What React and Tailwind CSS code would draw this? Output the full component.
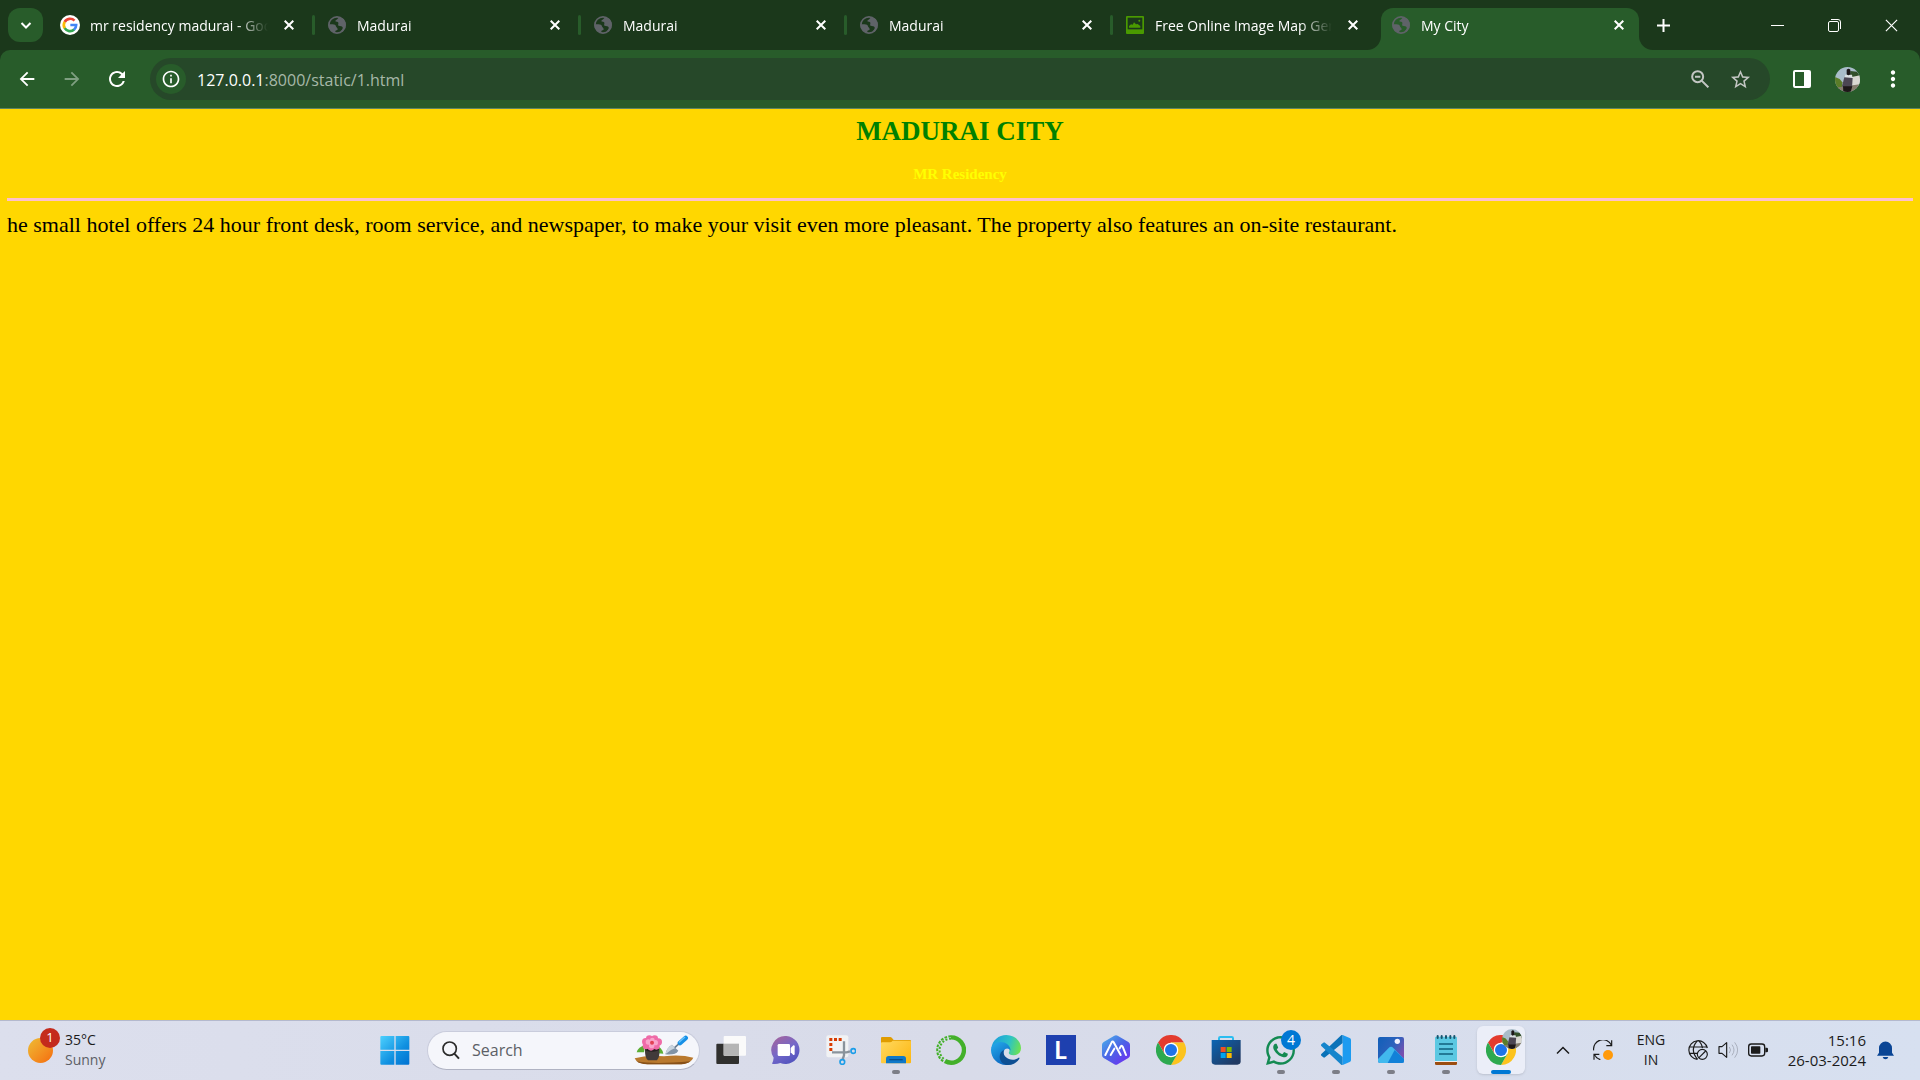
import { FaWhatsapp } from 'react-icons/fa';
import { MdArrowBack, MdArrowForward, MdRefresh, MdStarBorder, MdMoreVert, MdInfoOutline } from 'react-icons/md';

const Svg = ({ size = 'size-[30px]', box = '0 0 90 90', children }) => (
  <svg className={`${size} shrink-0`} viewBox={box} fill="none" aria-hidden="true">{children}</svg>
);

const Globe = () => (
  <Svg size="size-[18px]" box="0 0 54 54">
    <circle cx="27" cy="27" r="24.5" stroke="#5f6368" strokeWidth="5" />
    <path fill="#5f6368" d="M33 2c-3 7-8 8-11 12 0 4 8 2 9 6 1 5-3 7 1 9 5 2 10 0 12 5 1 5-3 9-7 12l6 2 9-11 1-15-5-12zM2 25h12c5 0 10 2 10 6 0 4 5 4 5 9 0 4-6 2-7 6v6L9 45 2 34z" />
  </Svg>
);

const GoogleIcon = () => (
  <Svg size="size-[20px]" box="0 0 60 60">
    <circle cx="30" cy="30" r="30" fill="#fff" />
    <g strokeWidth="8">
      <path stroke="#ea4335" d="M14 21A18.500 18.500 0 0 1 43.500 17" />
      <path stroke="#fbbc05" d="M14.500 40A18.500 18.500 0 0 1 14 20.500" />
      <path stroke="#34a853" d="M14 39.500A18.500 18.500 0 0 0 42.500 43.500" />
      <path stroke="#4285f4" d="M31 30H48.500A18.500 18.500 0 0 1 42 44" />
    </g>
  </Svg>
);

const PictureIcon = () => (
  <Svg size="size-[18px]" box="0 0 54 54">
    <rect width="54" height="54" rx="3" fill="#4a9a00" />
    <rect x="5" y="5" width="44" height="35" fill="#1b381b" />
    <path fill="#4a9a00" d="M9 35v-5l6-5 5 1 4-7 6 6 5-1 8 6v5z" />
    <circle cx="40" cy="14" r="3" fill="#4a9a00" />
  </Svg>
);

const Cross = ({ size = 'size-[10px]', width = 2 }) => (
  <Svg size={size} box="0 0 10 10"><path d="M.7.7l8.600 8.600M9.300.7L.7 9.300" stroke="#fff" strokeWidth={width} /></Svg>
);

const tabs = [
  { title: 'mr residency madurai - Google Search', Icon: GoogleIcon, gap: 'gap-[10px]', pad: 'pl-[9px]' },
  { title: 'Madurai', Icon: Globe },
  { title: 'Madurai', Icon: Globe },
  { title: 'Madurai', Icon: Globe },
  { title: 'Free Online Image Map Generator', Icon: PictureIcon, bare: true },
  { title: 'My City', Icon: Globe, active: true },
];

function Tab({ title, Icon, active, bare, gap = 'gap-[11px]', pad = 'pl-[11px]' }) {
  return (
    <div className={`relative flex h-[42px] min-w-0 items-center pb-2 ${pad} ${active ? 'w-[258px] rounded-t-xl bg-[#285c2a] pr-[10px]' : 'w-[266px] pr-[18px]'}`}>
      {active && (
        <>
          <span className="absolute bottom-0 -left-[14px] size-[14px] bg-[#285c2a]"><span className="block size-full rounded-br-[14px] bg-[#1b381b]" /></span>
          <span className="absolute bottom-0 -right-[14px] size-[14px] bg-[#285c2a]"><span className="block size-full rounded-bl-[14px] bg-[#1b381b]" /></span>
        </>
      )}
      <div className={`flex min-w-0 flex-1 items-center ${gap}`}>
        <Icon />
        <span className="min-w-0 flex-1 overflow-hidden pt-px text-sm whitespace-nowrap [mask-image:linear-gradient(to_right,black_82%,transparent)]">{title}</span>
      </div>
      <button aria-label={`Close ${title}`} className="ml-[11px] flex h-5 w-[20px] items-center justify-center"><Cross /></button>
      {!active && !bare && <span className="absolute right-[2px] top-[7px] h-5 w-[3px] rounded bg-[#285c2a]" />}
    </div>
  );
}

const Avatar = ({ size = 'size-[25px]' }) => (
  <Svg size={size} box="0 0 75 75">
    <defs><clipPath id="face"><circle cx="37.500" cy="37.500" r="37.500" /></clipPath></defs>
    <g clipPath="url(#face)">
      <rect width="75" height="75" fill="#a9bcc9" />
      <path fill="#33502a" d="M46 12l20 2 9 12v10H44z" />
      <path fill="#5b7d29" d="M0 30l14 6 8 10v20H0z" />
      <path fill="#d9d8d2" d="M50 30l25-5v30H50z" />
      <path fill="#857c6d" d="M0 62l75-10v23H0z" />
      <path fill="#dbe0e2" d="M31 23h20l2 12H28z" />
      <path fill="#4c4653" d="M28 31l25 2-2 28H25l-4-3z" />
      <path fill="#1d1718" d="M35 8q6-6 11 0v14q-6 6-11 0zM24 58h28l-5 17H25z" />
    </g>
  </Svg>
);

function Browser() {
  return (
    <header className="bg-[#1b381b] text-white">
      <div className="flex h-[50px] items-start pt-2">
        <button aria-label="Search tabs" className="mr-2 ml-2 flex h-[34px] w-[35px] shrink-0 items-center justify-center rounded-xl bg-[#285c2a]">
          <Svg size="size-3" box="0 0 12 12"><path d="M1.500 4L6 8.500 10.500 4" stroke="#fff" strokeWidth="2" /></Svg>
        </button>
        {tabs.map((t, i) => <Tab key={i} {...t} />)}
        <button aria-label="New tab" className="ml-[7px] flex size-[34px] shrink-0 items-center justify-center">
          <Svg size="size-[13px]" box="0 0 13 13"><path d="M6.500 0v13M0 6.500h13" stroke="#fff" strokeWidth="2" /></Svg>
        </button>
        <div className="ml-auto flex h-[34px] shrink-0">
          <button aria-label="Minimize" className="flex w-[57px] items-center justify-center"><Svg size="size-[13px]" box="0 0 13 13"><path d="M0 6.500h13" stroke="#fff" /></Svg></button>
          <button aria-label="Restore" className="flex w-[57px] items-center justify-center">
            <Svg size="size-[13px]" box="0 0 13 13"><rect x=".5" y="2.500" width="10" height="10" rx="1.500" stroke="#fff" /><path d="M3 .5h7a2.500 2.500 0 0 1 2.500 2.500v7" stroke="#fff" /></Svg>
          </button>
          <button aria-label="Close window" className="flex w-[57px] items-center justify-center"><Cross size="size-[13px]" width={0.9} /></button>
        </div>
      </div>
      <div className="flex h-[59px] items-center rounded-t-[10px] border-b border-[#5d8560] bg-[#285c2a]">
        <div className="flex w-[150px] shrink-0 items-center pl-4">
          <button aria-label="Back" className="mr-[23px]"><MdArrowBack className="size-[22px]" /></button>
          <button aria-label="Forward" className="mr-[22px]"><MdArrowForward className="size-[22px] text-[#7f9f81]" /></button>
          <button aria-label="Reload"><MdRefresh className="size-6" /></button>
        </div>
        <form className="flex h-[42px] min-w-0 flex-1 items-center rounded-full bg-[#264829] pr-[18px] pl-[6px]">
          <button type="button" aria-label="Site information" className="flex size-[30px] items-center justify-center rounded-full bg-[#285c2a]"><MdInfoOutline className="size-5" /></button>
          <div role="textbox" aria-label="Address" tabIndex={0} className="ml-[11px] flex-1 pt-px text-base text-[#a6b8a8]"><span className="text-white">127.0.0.1</span>:8000/static/1.html</div>
          <button type="button" aria-label="Zoom" className="mr-[20px]">
            <Svg size="size-[18px]" box="0 0 54 54"><g stroke="#c3c6c3" strokeWidth="6"><circle cx="20" cy="20" r="16.500" /><path d="M32 32l20 20M12 20h16" /></g></Svg>
          </button>
          <button type="button" aria-label="Bookmark"><MdStarBorder className="size-[23px] text-[#c3c6c3]" /></button>
        </form>
        <div className="flex w-[150px] shrink-0 items-center pl-[23px]">
          <button aria-label="Side panel"><Svg size="size-[18px]" box="0 0 18 18"><rect x="1" y="1" width="16" height="16" rx="1" stroke="#fff" strokeWidth="2" /><path fill="#fff" d="M11 1h6v16h-6z" /></Svg></button>
          <button aria-label="Profile" className="ml-6"><Avatar /></button>
          <button aria-label="Menu" className="ml-[20px]"><MdMoreVert className="size-[26px]" /></button>
        </div>
      </div>
    </header>
  );
}

const Start = () => (
  <Svg>
    <defs><linearGradient id="win" x1="0" y1="0" x2="90" y2="90" gradientUnits="userSpaceOnUse"><stop stopColor="#4fd3ff" /><stop offset=".6" stopColor="#0f8fe0" /><stop offset="1" stopColor="#0070d0" /></linearGradient></defs>
    <path fill="url(#win)" d="M4 3h39v41H1V6q0-3 3-3zM47 3h38q3 0 3 3v38H47zM1 48h42v41H4q-3 0-3-3zM47 48h41v38q0 3-3 3H47z" />
  </Svg>
);

const Flower = () => (
  <Svg size="h-[30px] w-[60px]" box="0 0 180 90">
    <path fill="#b9792e" d="M2 70q40-12 88-6 50-6 88 4-6 16-36 20H40Q8 86 2 70z" />
    <path fill="#875018" d="M8 79q50 10 162 0-10 8-28 9H40q-24-1-32-9z" />
    <path fill="#5cae35" d="M8 52q4-16 26-22l-4 22zM64 30q20 6 24 26l-24-2z" />
    <path fill="#413a3a" d="M33 42h43q2 24-7 34H42q-10-8-9-34z" />
    <ellipse cx="54" cy="43" rx="21" ry="7" fill="#252020" />
    <g fill="#ef6ba8"><circle cx="35" cy="20" r="11" /><circle cx="46" cy="11" r="10" /><circle cx="62" cy="11" r="10" /><circle cx="73" cy="21" r="11" /><circle cx="67" cy="34" r="10" /><circle cx="51" cy="37" r="10" /><circle cx="36" cy="33" r="10" /></g>
    <g fill="#f9a5cb"><circle cx="43" cy="21" r="8" /><circle cx="55" cy="15" r="7" /><circle cx="64" cy="23" r="8" /><circle cx="53" cy="32" r="8" /></g>
    <circle cx="54" cy="23" r="6" fill="#e24255" />
    <path fill="#8193a6" d="M94 58q4-20 20-29l19 18q-8 14-39 11z" />
    <path fill="#c9d4df" d="M94 58q14-14 30-19l-10-10q-16 9-20 29z" />
    <path stroke="#687c90" strokeWidth="5" d="M122 38l14-13" />
    <path stroke="#168fe6" strokeWidth="14" strokeLinecap="round" d="M138 24l17-15" />
    <path stroke="#66c2fb" strokeWidth="4" strokeLinecap="round" d="M136 21l16-14" />
  </Svg>
);

const TaskView = () => (
  <Svg>
    <rect x="1" y="26" width="68" height="61" rx="3" fill="#30302e" />
    <rect x="23" y="3" width="67" height="59" rx="3" fill="#fafafa" />
    <path fill="#b5b5b5" d="M23 26h46v36H23z" />
  </Svg>
);

const Chat = () => (
  <Svg>
    <defs><linearGradient id="cht" x1="10" y1="10" x2="60" y2="90" gradientUnits="userSpaceOnUse"><stop stopColor="#a164a0" /><stop offset=".5" stopColor="#7468c9" /><stop offset="1" stopColor="#4f52bd" /></linearGradient></defs>
    <path fill="url(#cht)" d="M46 3a42 42 0 1 1-18 81Q16 88 3 86q4-7 5-18A42 42 0 0 1 46 3z" />
    <rect x="20" y="27" width="37" height="36" rx="4" fill="#fff" /><path fill="#fff" d="M59 39l8-8q4-1 4 3v23q0 4-4 3l-8-8z" />
  </Svg>
);

const Snip = () => (
  <Svg>
    <rect x="1" y="1" width="66" height="66" rx="6" fill="#f1f2f4" />
    <path fill="#d83b01" d="M10 9h9v9h-9zM24 9h9v9h-9zM38 9h9v9h-9zM10 24h9v9h-9zM10 39h9v9h-9z" />
    <path stroke="#8a939b" strokeWidth="7" d="M54 19v42l-4 12M18 52h44l10-3" />
    <circle cx="82" cy="48" r="7" stroke="#1c9de8" strokeWidth="5" /><circle cx="49" cy="81" r="7" stroke="#1c9de8" strokeWidth="5" />
  </Svg>
);

const Folder = () => (
  <Svg>
    <defs><linearGradient id="fld" x1="0" y1="15" x2="80" y2="90" gradientUnits="userSpaceOnUse"><stop stopColor="#ffd961" /><stop offset="1" stopColor="#fdb813" /></linearGradient></defs>
    <path fill="#e09c00" d="M0 9q0-3 3-3h24q4 0 6 3l5 6h49q3 0 3 3v20H0z" />
    <path fill="url(#fld)" d="M0 25q0-3 3-3h24q4 0 8-5h52q3 0 3 3v62q0 3-3 3H3q-3 0-3-3z" />
    <path fill="#0f78c8" d="M15 85V71q0-8 8-8h44q8 0 8 8v14z" /><path stroke="#084f8c" strokeWidth="4" d="M25 74h40" />
  </Svg>
);

const Anaconda = () => (
  <Svg>
    <path stroke="#43b02a" strokeWidth="13" d="M45 7a38 38 0 1 1-18 71" />
    <path stroke="#43b02a" strokeWidth="6" strokeDasharray="8 4" d="M45 4A41 41 0 0 0 25 81" />
    <path stroke="#43b02a" strokeWidth="6" strokeDasharray="6 5" d="M45 11A34 34 0 0 0 27 74" />
  </Svg>
);

const Edge = () => (
  <Svg>
    <defs>
      <linearGradient id="eg1" x1="5" y1="20" x2="90" y2="45" gradientUnits="userSpaceOnUse"><stop stopColor="#1c9fdc" /><stop offset=".55" stopColor="#2dc3c5" /><stop offset="1" stopColor="#72e448" /></linearGradient>
      <linearGradient id="eg2" x1="0" y1="30" x2="40" y2="90" gradientUnits="userSpaceOnUse"><stop stopColor="#22a6e8" /><stop offset="1" stopColor="#0c63bd" /></linearGradient>
    </defs>
    <path fill="url(#eg1)" d="M1 40C4 16 23 0 46 0c27 0 44 20 44 40 0 14-11 21-22 21-13 0-16-5-14-9 3-6 1-16-9-18C30 30 12 30 1 40z" />
    <path fill="url(#eg2)" d="M0 45c0-15 14-24 28-24 16 0 30 10 31 26-5-8-16-9-20 0-6 14 8 33 27 38-5 3-13 5-21 5C20 90 0 70 0 45z" />
    <path fill="#0d4f93" d="M39 45c-6 13 7 29 26 29 8 0 14-3 18-6 2-1 3 1 2 3-6 10-17 19-34 19-15 0-25-13-25-25 0-9 5-17 13-20z" />
  </Svg>
);

const Letter = () => <span className="flex size-[30px] items-center justify-center bg-[#1e40af] font-['Lato'] text-2xl leading-none font-bold text-white">L</span>;

const Peaks = () => (
  <Svg>
    <defs><linearGradient id="hex" x1="10" y1="10" x2="75" y2="80" gradientUnits="userSpaceOnUse"><stop stopColor="#4aa6ea" /><stop offset=".5" stopColor="#4b63e6" /><stop offset="1" stopColor="#6a35f0" /></linearGradient></defs>
    <path fill="url(#hex)" d="M40 2q5-3 10 0l32 19q5 3 5 8v32q0 5-5 8L50 88q-5 3-10 0L8 69q-5-3-5-8V29q0-5 5-8z" />
    <path stroke="#fff" strokeWidth="6" strokeLinecap="round" strokeLinejoin="round" d="M13 60l19-38q3-5 6 0l21 38M29 60l11-19M56 40l4-7q3-2 5 2l10 25" />
  </Svg>
);

const Chrome = () => (
  <Svg>
    <path fill="#e33b2e" d="M6 22.500A45 45 0 0 1 84 22.500H45L26 56z" />
    <path fill="#fcc31e" d="M84 22.500A45 45 0 0 1 45 90l19.500-33.500L45 22.500z" />
    <path fill="#2da94f" d="M6 22.500A45 45 0 0 0 45 90l19.500-33.700H25.500z" />
    <circle cx="45" cy="45" r="22" fill="#fff" /><circle cx="45" cy="45" r="18" fill="#1f74e8" />
  </Svg>
);

const Store = () => (
  <Svg>
    <defs><linearGradient id="str" x1="0" y1="15" x2="60" y2="90" gradientUnits="userSpaceOnUse"><stop stopColor="#0a66b5" /><stop offset="1" stopColor="#213a63" /></linearGradient></defs>
    <path stroke="#2bbdf0" strokeWidth="6" d="M24 20V10q0-4 4-4h34q4 0 4 4v10" />
    <path fill="url(#str)" d="M2 15h87v64q0 10-10 10H12Q2 89 2 79z" />
    <path fill="#f25022" d="M29 36h15v15H29z" /><path fill="#7fba00" d="M47 36h15v15H47z" /><path fill="#00a4ef" d="M29 54h15v15H29z" /><path fill="#ffb900" d="M47 54h15v15H47z" />
  </Svg>
);

const WhatsApp = () => (
  <span className="relative">
    <FaWhatsapp className="size-[33px] text-[#138a52]" />
    <span className="absolute -top-[4px] -right-[4px] flex size-5 items-center justify-center rounded-full bg-[#0078d4] text-sm leading-none text-white">4</span>
  </span>
);

const Code = () => (
  <Svg>
    <path fill="#0a72b8" d="M65 0v24L12 67q-3 2-5 0l-6-5q-2-3 0-5L59 2q3-3 6-2z" />
    <path fill="#1585cc" d="M65 90V66L12 23q-3-2-5 0l-6 5q-2 3 0 5l58 55q3 3 6 2z" />
    <path fill="#1d9bf0" d="M65 0l21 9q4 2 4 6v60q0 4-4 6l-21 9z" />
  </Svg>
);

const Photos = () => (
  <Svg>
    <defs><linearGradient id="pho" x1="0" y1="10" x2="80" y2="60" gradientUnits="userSpaceOnUse"><stop stopColor="#0f5fb8" /><stop offset=".6" stopColor="#2d62bd" /><stop offset="1" stopColor="#7d4fae" /></linearGradient></defs>
    <rect x="6" y="6" width="78" height="78" rx="6" fill="url(#pho)" />
    <path fill="#41b9ee" d="M6 72l32-33q7-7 14 0l32 33v6q0 6-6 6H12q-6 0-6-6z" />
    <path fill="#1281d8" d="M35 84l21-39 28 27v6q0 6-6 6z" /><circle cx="64" cy="19" r="8" fill="#f0f2ff" />
  </Svg>
);

const Notepad = () => (
  <Svg>
    <path fill="#9b4d10" d="M12 80h66v6q0 4-4 4H16q-4 0-4-4z" /><path fill="#eee" d="M12 76h66v5H12z" />
    <path fill="#5bc8e2" d="M12 8q0-3 3-3h60q3 0 3 3v70H12z" />
    <path stroke="#12607e" strokeWidth="5" d="M24 27h42M24 42h42M24 57h42" />
    <path stroke="#17556e" strokeWidth="6" strokeLinecap="round" d="M20 3v6M32 3v6M45 3v6M58 3v6M70 3v6" />
  </Svg>
);

const ChromeProfile = () => (
  <span className="relative"><Chrome /><span className="absolute -top-[6px] -right-[6px]"><Avatar size="size-[20px]" /></span></span>
);

const apps = [
  ['Task view', TaskView], ['Chat', Chat], ['Snipping Tool', Snip], ['File Explorer', Folder, true], ['Anaconda', Anaconda],
  ['Edge', Edge], ['L', Letter], ['Peaks', Peaks], ['Chrome', Chrome], ['Store', Store], ['WhatsApp', WhatsApp, true],
  ['Visual Studio Code', Code, true], ['Photos', Photos, true], ['Notepad', Notepad, true], ['Chrome profile', ChromeProfile, true, true],
];

function Taskbar() {
  return (
    <footer className="flex h-[60px] shrink-0 items-center border-t border-[#b4b9cd] bg-linear-to-r from-[#dcdfed] via-[#d8dbe9] to-[#d7e0f0] pb-px text-[#1b1b1b]">
      <button className="flex min-w-0 flex-1 items-center gap-3 pl-7 text-left">
        <span className="relative size-[25px] rounded-full bg-linear-to-br from-[#ecbc34] to-[#f46a0c]">
          <span className="absolute -top-[10px] -right-[7px] flex size-5 items-center justify-center rounded-full bg-[#c42b1c] text-[13px] leading-none text-white">1</span>
        </span>
        <span className="text-sm leading-5">35°C<span className="block text-[#5c5f66]">Sunny</span></span>
      </button>
      <nav className="flex shrink-0 items-center">
        <button aria-label="Start" className="flex w-[55px] justify-center"><Start /></button>
        <label className="mr-[3px] ml-[5px] flex h-[39px] w-[273px] items-center rounded-full border border-[#c9ccdc] border-b-[#b0b3c3] bg-[#f5f6fb] pr-[5px] pl-[13px]">
          <Svg size="size-[19px]" box="0 0 57 57"><circle cx="26" cy="23" r="20" stroke="#2b2b2b" strokeWidth="5" /><path d="M40 38l14 15" stroke="#2b2b2b" strokeWidth="6" /></Svg>
          <input aria-label="Search" placeholder="Search" className="ml-3 min-w-0 flex-1 bg-transparent text-base outline-none placeholder:text-[#5c5f66]" />
          <Flower />
        </label>
        {apps.map(([name, Icon, open, active]) => (
          <button key={name} aria-label={name} className="flex w-[55px] justify-center">
            <span className={`relative flex size-12 items-center justify-center rounded-md ${active ? 'bg-[#ebeef8] shadow-sm' : ''}`}>
              <Icon />
              {open && <span className={`absolute bottom-0 h-1 rounded-full ${active ? 'w-5 bg-[#0078d4]' : 'w-2 bg-[#7c7e87]'}`} />}
            </span>
          </button>
        ))}
      </nav>
      <div className="flex w-[392px] shrink-0 items-center pl-[28px] text-sm leading-5">
        <button aria-label="Hidden icons"><Svg size="size-[14px]" box="0 0 14 14"><path d="M1 10.500l6-6 6 6" stroke="#1b1b1b" strokeWidth="1.500" /></Svg></button>
        <button aria-label="Updates" className="ml-[23px]">
          <Svg size="size-5" box="0 0 60 60"><g stroke="#1b1b1b" strokeWidth="3.500"><path d="M2 31A28 28 0 0 1 55 15M56 1v16H40M22 59Q9 55 4 43M3 59V43h16" /></g><circle cx="45" cy="45" r="15" fill="#ff9a0a" /></Svg>
        </button>
        <button className="ml-[18px] w-10 text-center">ENG<br />IN</button>
        <button aria-label="Network, sound and battery" className="ml-[17px] flex items-center gap-[10px]">
          <Svg size="size-5" box="0 0 60 60"><g stroke="#1b1b1b" strokeWidth="3.500"><path d="M58 24A28 28 0 1 0 28 58M3 21h53M3 40h24M29 2q-26 26 0 56M31 2q11 9 12 22" /><circle cx="43" cy="43" r="15" /><path d="M33 53l20-20" /></g></Svg>
          <Svg size="size-5" box="0 0 60 60"><path d="M3 20h9L26 8v44L12 40H3z" stroke="#1b1b1b" strokeWidth="3.500" strokeLinejoin="round" /><path d="M34 21q7 9 0 18M42 14q12 16 0 32M50 7q18 23 0 46" stroke="#aab0be" strokeWidth="3" /></Svg>
          <Svg size="size-5" box="0 0 60 60"><rect x="2" y="12" width="48" height="36" rx="8" stroke="#1b1b1b" strokeWidth="4" /><rect x="9" y="19" width="28" height="22" rx="2" fill="#1b1b1b" /><path fill="#1b1b1b" d="M52 23h4q4 0 4 4v6q0 4-4 4h-4z" /></Svg>
        </button>
        <button className="ml-auto text-right text-[15px] whitespace-nowrap">15:16<br />26-03-2024</button>
        <button aria-label="Notifications" className="mr-[26px] ml-[11px]">
          <Svg size="h-5 w-[17px]" box="0 0 51 60"><path fill="#0a4595" d="M6 24a19 19 0 0 1 39 0v14l6 9H0l6-9zM17 51h17q-2 7-8.500 7T17 51z" /></Svg>
        </button>
      </div>
    </footer>
  );
}

export default function App() {
  return (
    <div className="flex h-screen flex-col overflow-hidden font-['Open_Sans',sans-serif]">
      <Browser />
      <main className="min-h-0 flex-1 bg-[#ffd700] px-[7px] pt-[7px] font-['Liberation_Serif',serif]">
        <h1 className="text-center text-[27px] leading-[30px] font-bold text-[#008000]">MADURAI CITY</h1>
        <h2 className="mt-[18px] text-center text-[15px] leading-5 font-bold text-[#ffff00]">MR Residency</h2>
        <hr className="mt-[14px] h-[3px] border-0 bg-[#ffc0cb]" />
        <p className="mt-[11px] text-[22px] leading-[26px] text-black">he small hotel offers 24 hour front desk, room service, and newspaper, to make your visit even more pleasant. The property also features an on-site restaurant.</p>
      </main>
      <Taskbar />
    </div>
  );
}
